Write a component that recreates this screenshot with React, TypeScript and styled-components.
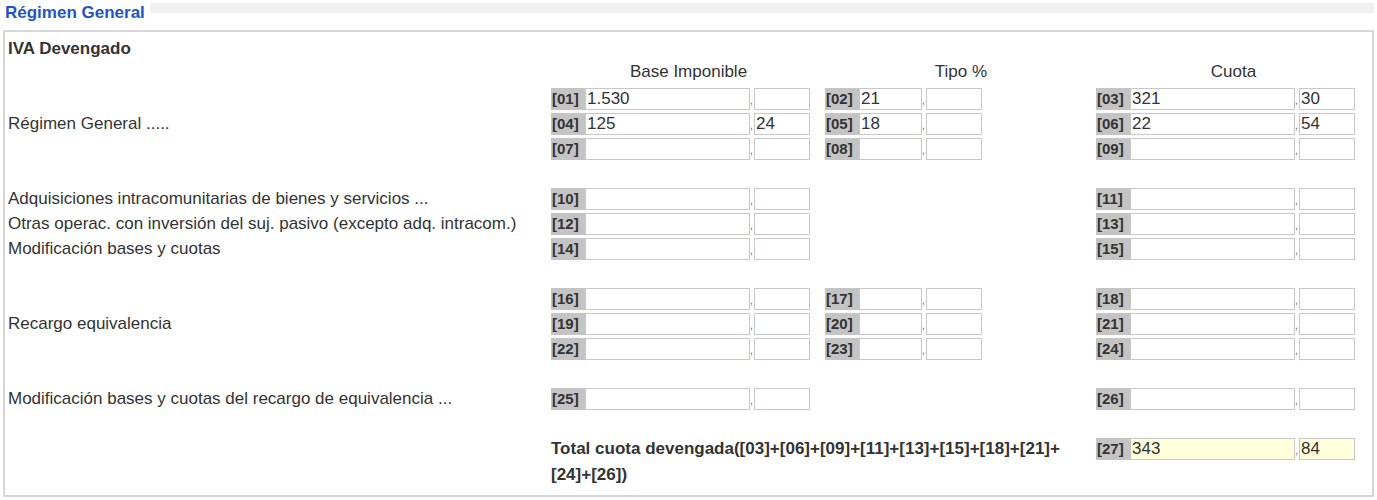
import React from "react";
import styled, { createGlobalStyle } from "styled-components";

const G = createGlobalStyle`
  body { margin: 0; background: #fff; font-family: "Liberation Sans", Arial, sans-serif; color: #333; }
`;

const Legend = styled.div`
  position: relative; margin: 3px 3px 0 3px; height: 19px;
  background: linear-gradient(#f0f0f0 0, #f0f0f0 10px, #fff 10px);
`;
const LegendText = styled.span`
  display: inline-block; background: #fff; padding: 0 5px 0 2px; height: 19px; line-height: 19px;
  color: #2354c7; font-weight: bold; font-size: 17px;
`;
const Box = styled.div`
  margin: 8px 3px 0 3px; border: 2px solid #d6d6d6; height: 467px; box-sizing: border-box;
  padding: 7px 0 0 3px;
`;
const Title = styled.div`font-weight: bold; font-size: 17px; height: 20px; line-height: 20px;`;
const Grid = styled.div`
  display: grid;
  grid-template-columns: 543px 259px 15px 157px 114px 259px;
  grid-auto-rows: 25px;
  font-size: 17px;
  margin-top: 4px;
`;
const Head = styled.div<{ $col: number; $right?: boolean }>`
  grid-column: ${p => p.$col}; text-align: ${p => (p.$right ? "right" : "center")};
  line-height: 17px; align-self: start; margin-right: ${p => (p.$right ? "-5px" : "0")};
  padding-left: ${p => (p.$right ? 0 : 16)}px;
`;
const Label = styled.div<{ $row: number }>`
  grid-column: 1; grid-row: ${p => p.$row}; line-height: 22px; align-self: start;
`;
const Field = styled.div<{ $col: number; $row: number }>`
  grid-column: ${p => p.$col}; grid-row: ${p => p.$row};
  display: flex; align-items: stretch; height: 22px;
`;
const Code = styled.span`
  width: 34px; background: #c4c4c4; font-weight: bold; font-size: 15px; line-height: 22px; padding-left: 1px; box-sizing: border-box;
`;
const Inp = styled.span<{ $w: number; $y?: boolean }>`
  width: ${p => p.$w}px; box-sizing: border-box; border: 1px solid #c8c8c8;
  background: ${p => (p.$y ? "#ffffdc" : "#fff")}; line-height: 20px; padding-left: 1px;
`;
const Comma = styled.span`width: 4px; font-size: 10px; line-height: 26px; color: #666;`;
const Total = styled.div`
  grid-column: 2 / 6; grid-row: 16 / 18; font-weight: bold; line-height: 26px; margin-top: -2px;
`;

type F = [string, string?, string?];
function Fld({ col, row, f, w, y }: { col: number; row: number; f: F; w: number; y?: boolean }) {
  return (
    <Field $col={col} $row={row}>
      <Code>[{f[0]}]</Code>
      <Inp $w={w} $y={y}>{f[1] ?? ""}</Inp>
      <Comma>,</Comma>
      <Inp $w={56} $y={y}>{f[2] ?? ""}</Inp>
    </Field>
  );
}

const rows: { row: number; a?: F; b?: F; c: F }[] = [
  { row: 2, a: ["01", "1.530"], b: ["02", "21"], c: ["03", "321", "30"] },
  { row: 3, a: ["04", "125", "24"], b: ["05", "18"], c: ["06", "22", "54"] },
  { row: 4, a: ["07"], b: ["08"], c: ["09"] },
  { row: 6, a: ["10"], c: ["11"] },
  { row: 7, a: ["12"], c: ["13"] },
  { row: 8, a: ["14"], c: ["15"] },
  { row: 10, a: ["16"], b: ["17"], c: ["18"] },
  { row: 11, a: ["19"], b: ["20"], c: ["21"] },
  { row: 12, a: ["22"], b: ["23"], c: ["24"] },
  { row: 14, a: ["25"], c: ["26"] },
];

export default function App() {
  return (
    <>
      <G />
      <Legend><LegendText>Régimen General</LegendText></Legend>
      <Box>
        <Title>IVA Devengado</Title>
        <Grid>
          <Head $col={2}>Base Imponible</Head>
          <Head $col={4} $right>Tipo %</Head>
          <Head $col={6}>Cuota</Head>
          <Label $row={3}>Régimen General .....</Label>
          <Label $row={6}>Adquisiciones intracomunitarias de bienes y servicios ...</Label>
          <Label $row={7}>Otras operac. con inversión del suj. pasivo (excepto adq. intracom.)</Label>
          <Label $row={8}>Modificación bases y cuotas</Label>
          <Label $row={11}>Recargo equivalencia</Label>
          <Label $row={14}>Modificación bases y cuotas del recargo de equivalencia ...</Label>
          {rows.map(r => (
            <React.Fragment key={r.row}>
              {r.a && <Fld col={2} row={r.row} f={r.a} w={165} />}
              {r.b && <Fld col={4} row={r.row} f={r.b} w={63} />}
              <Fld col={6} row={r.row} f={r.c} w={165} />
            </React.Fragment>
          ))}
          <Total>Total cuota devengada([03]+[06]+[09]+[11]+[13]+[15]+[18]+[21]+<br />[24]+[26])</Total>
          <Fld col={6} row={16} f={["27", "343", "84"]} w={165} y />
        </Grid>
      </Box>
    </>
  );
}
